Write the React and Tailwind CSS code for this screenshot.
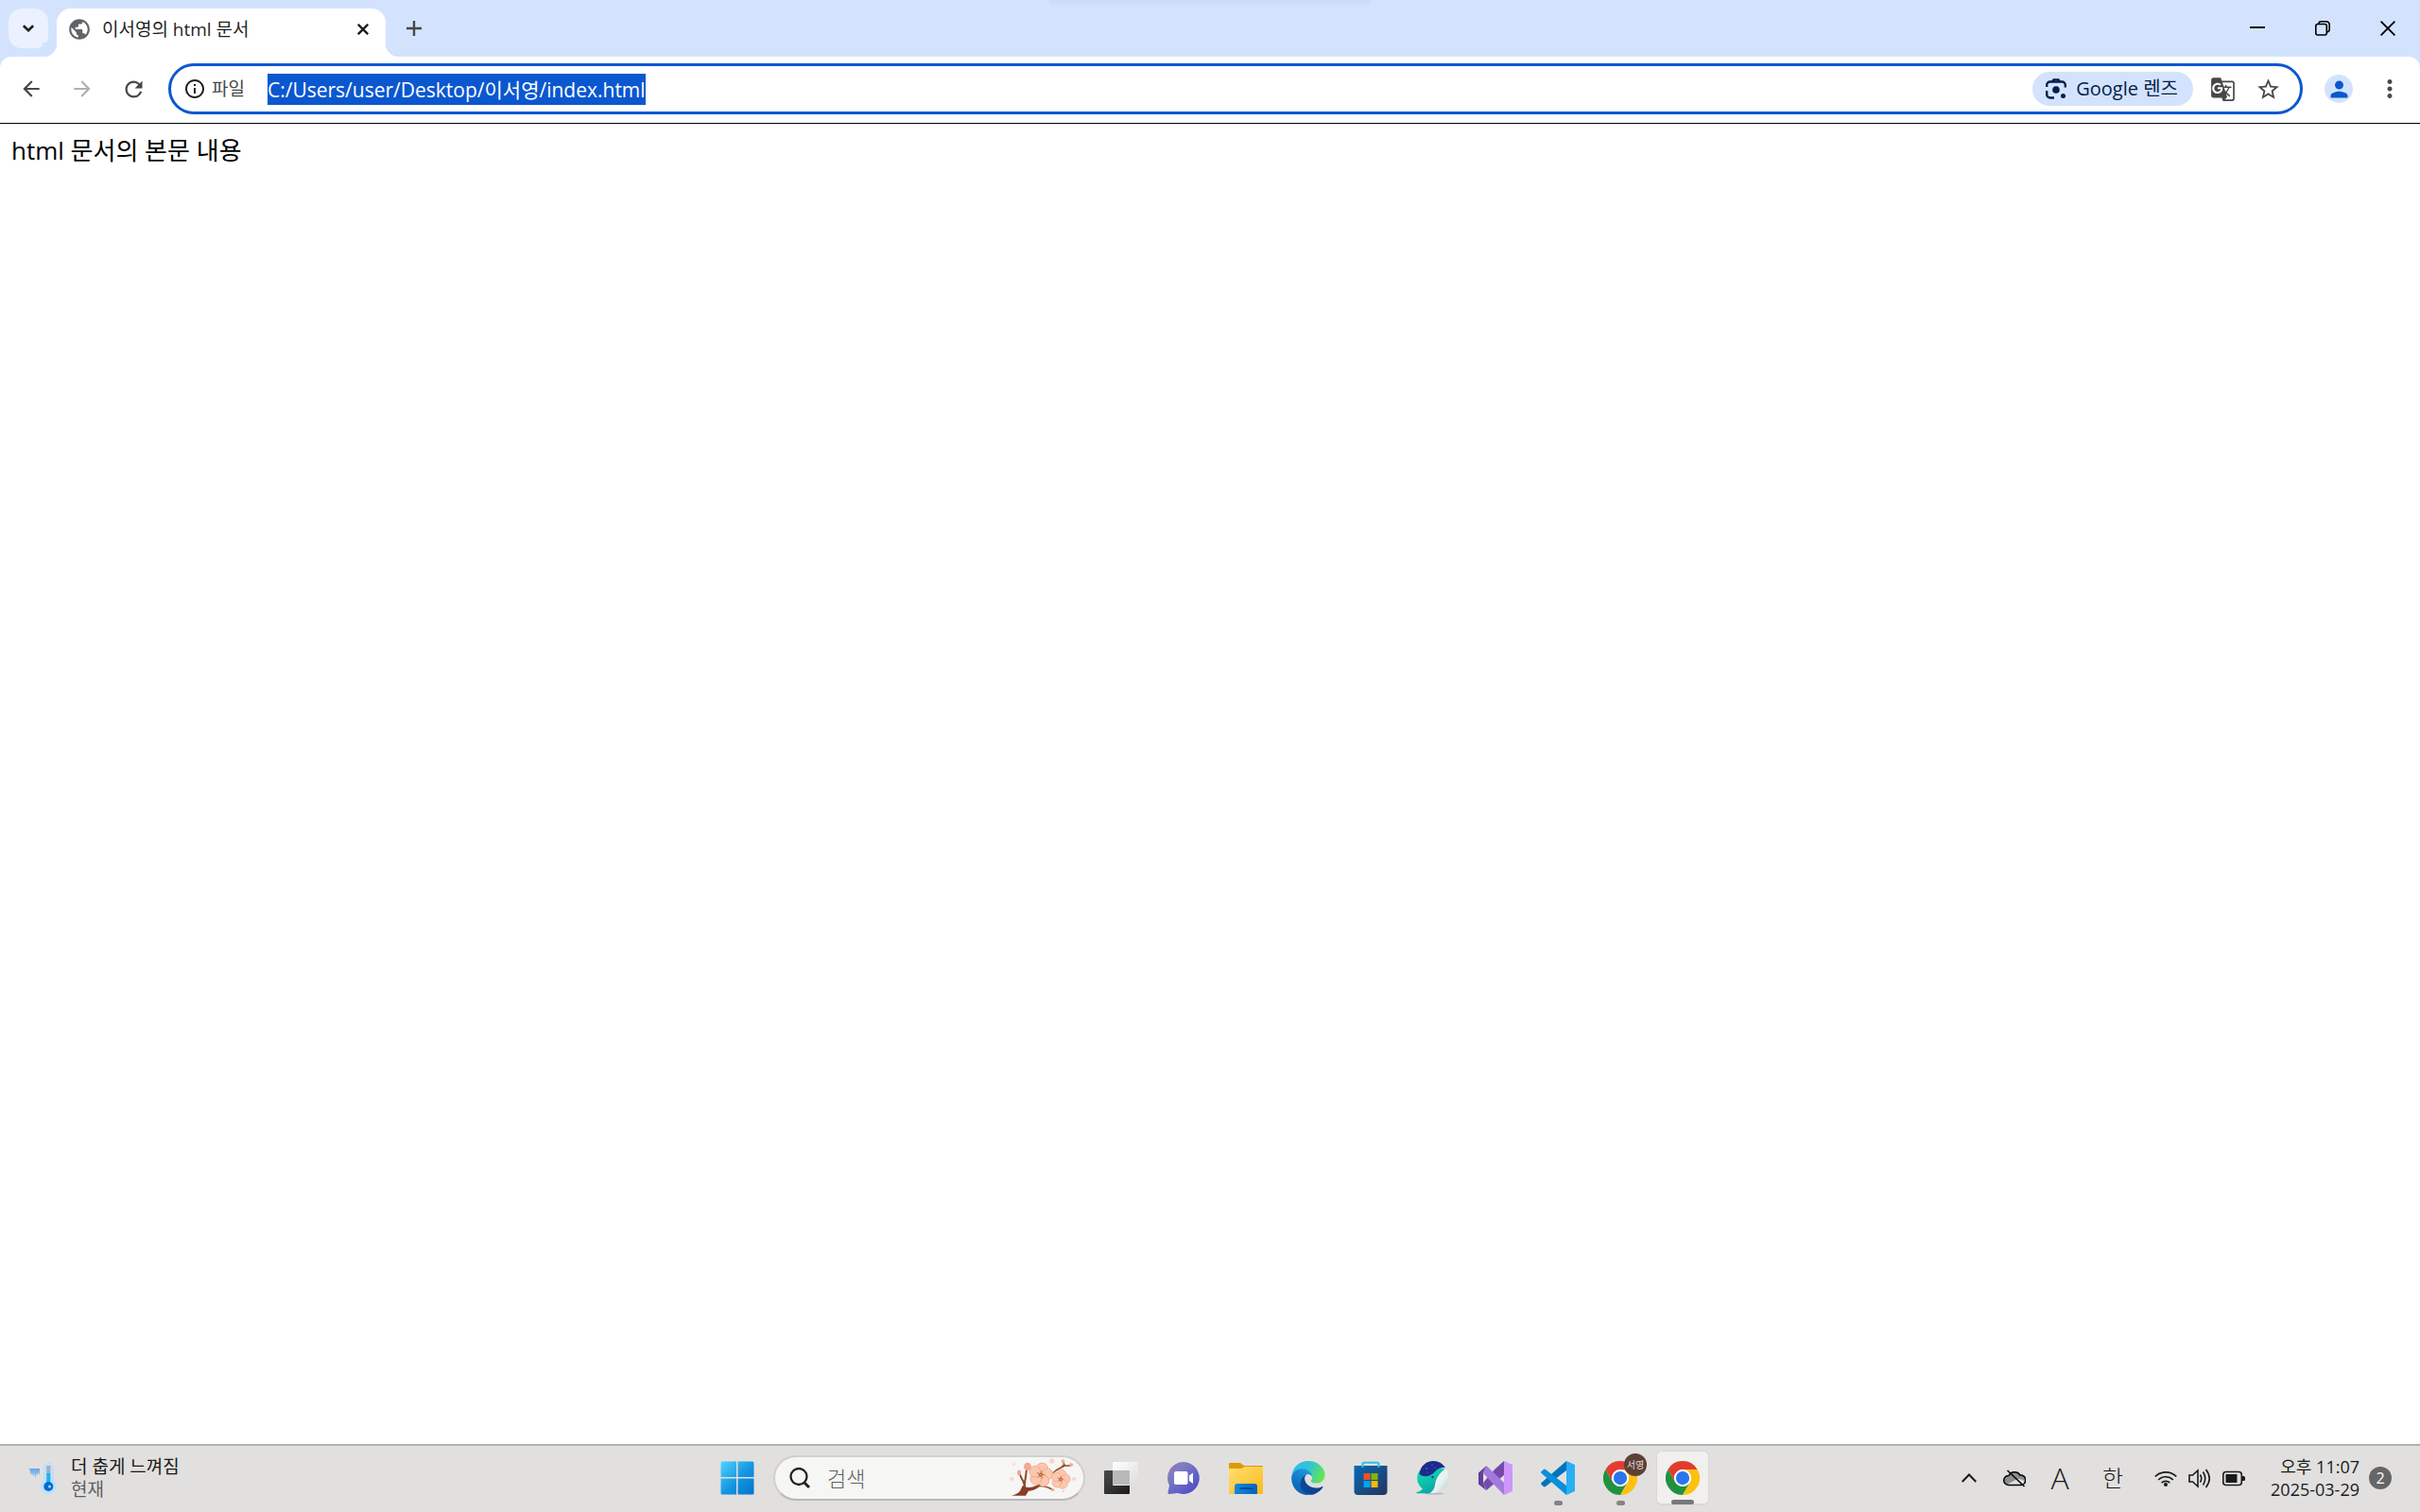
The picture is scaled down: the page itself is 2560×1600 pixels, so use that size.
import {
	MdArrowBack,
	MdArrowForward,
	MdGTranslate,
	MdInfoOutline,
	MdMoreVert,
	MdPerson,
	MdPublic,
	MdRefresh,
	MdStarBorder,
} from "react-icons/md";

function TabStrip() {
	return (
		<header className="relative flex h-[60px] items-start bg-[#d3e3fd] pt-[9px] pl-[9px]">
			<div className="absolute top-0 left-1/2 h-2 w-[340px] -translate-x-1/2 rounded-b-xl bg-linear-to-b from-[#cadbf5] to-[#d3e3fd]" />
			<button
				aria-label="탭 검색"
				className="flex size-[42px] items-center justify-center rounded-[14px] bg-[#ebf1fe]"
			>
				<svg className="h-2 w-3" viewBox="0 0 12 8" fill="none" stroke="#1f1f1f" strokeWidth="2.600">
					<path d="M.9 1.200 6 6.200l5.100-5" />
				</svg>
			</button>
			<div className="relative ml-[9px] flex h-[51px] w-[348px] items-center rounded-t-[15px] bg-white pr-3 pb-2 pl-[11px]">
				<span className="absolute bottom-0 -left-[15px] size-[15px] bg-[radial-gradient(circle_at_0_0,#d3e3fd_15px,#fff_16px)]" />
				<span className="absolute -right-[15px] bottom-0 size-[15px] bg-[radial-gradient(circle_at_100%_0,#d3e3fd_15px,#fff_16px)]" />
				<MdPublic className="size-[26px] text-[#5f6368]" />
				<span className="ml-[11px] flex-1 text-[19px] leading-6 text-[#1f1f1f]">이서영의 html 문서</span>
				<button aria-label="탭 닫기" className="flex size-6 items-center justify-center">
					<svg className="size-3" viewBox="0 0 12 12" stroke="#1f1f1f" strokeWidth="2.400">
						<path d="m.8.8 10.400 10.400M11.200.8.8 11.200" />
					</svg>
				</button>
			</div>
			<button aria-label="새 탭" className="ml-[9px] flex size-[42px] items-center justify-center">
				<svg className="size-4" viewBox="0 0 16 16" stroke="#474747" strokeWidth="2.400">
					<path d="M8 0v16M0 8h16" />
				</svg>
			</button>
			<div className="-mt-[9px] ml-auto flex h-[60px]">
				<button aria-label="최소화" className="flex w-[69px] items-center justify-center">
					<svg className="size-4" viewBox="0 0 16 16" stroke="#000" strokeWidth="2">
						<path d="M0 7h16" />
					</svg>
				</button>
				<button aria-label="이전 크기로 복원" className="flex w-[69px] items-center justify-center">
					<svg className="size-4" viewBox="0 0 16 16" fill="none" stroke="#000" strokeWidth="1.600">
						<rect x=".8" y="3.500" width="11.500" height="11.500" rx="2" />
						<path d="M3.800 3.200C4 1.500 5 .8 6.200.8h5.300c2.400 0 3.700 1.400 3.700 3.700V9c0 1.600-.8 2.700-2.600 3" />
					</svg>
				</button>
				<button aria-label="닫기" className="flex w-[69px] items-center justify-center">
					<svg className="size-4" viewBox="0 0 16 16" stroke="#000" strokeWidth="1.800">
						<path d="m.6.6 14.800 14.800M15.400.6.6 15.400" />
					</svg>
				</button>
			</div>
		</header>
	);
}

function LensIcon() {
	return (
		<svg className="size-[22px]" viewBox="0 0 22 22" fill="none" stroke="#041e49" strokeWidth="2.400">
			<path d="M1.200 9V7a3.500 3.500 0 0 1 3.500-3.500h12.600A3.500 3.500 0 0 1 20.800 7v2.500M1.200 13v4a3.500 3.500 0 0 0 3.500 3.500H9" />
			<path d="M7.200 3.500 8.500 1.400h5l1.300 2.100" />
			<circle cx="11" cy="12" r="3.800" fill="#041e49" stroke="none" />
			<circle cx="18.500" cy="18.500" r="2.500" fill="#041e49" stroke="none" />
		</svg>
	);
}

function Toolbar() {
	return (
		<div className="bg-[#d3e3fd]">
			<nav className="flex h-[71px] items-center rounded-t-xl border-b border-black bg-white pr-[11px] pb-0.5 pl-3 text-[#474747]">
				<div className="flex gap-3">
					<button aria-label="뒤로" className="flex size-[42px] items-center justify-center">
						<MdArrowBack className="size-[26px]" />
					</button>
					<button aria-label="앞으로" disabled className="flex size-[42px] items-center justify-center text-[#b0b0b0]">
						<MdArrowForward className="size-[26px]" />
					</button>
					<button aria-label="새로고침" className="flex size-[42px] items-center justify-center">
						<MdRefresh className="size-[27px]" />
					</button>
				</div>
				<div className="ml-4 flex h-[54px] flex-1 items-center rounded-full border-3 border-[#0b57d0] pr-5 pl-[13px]">
					<button className="flex items-center gap-1.5 text-[19px] leading-6">
						<MdInfoOutline className="size-6 text-[#1f1f1f]" />
						파일
					</button>
					<input
						aria-label="주소창"
						defaultValue="C:/Users/user/Desktop/이서영/index.html"
						className="ml-6 h-[33px] field-sizing-content bg-[#0b57d0] text-[21px] text-white outline-none"
					/>
					<button className="ml-auto flex h-9 items-center gap-2.5 rounded-full bg-[#d3e3fd] pr-4 pl-3.5 text-[20px] leading-6 text-[#041e49]">
						<LensIcon />
						Google 렌즈
					</button>
					<button aria-label="이 페이지 번역하기" className="ml-[18px]">
						<MdGTranslate className="size-[27px]" />
					</button>
					<button aria-label="북마크에 추가" className="ml-[21px]">
						<MdStarBorder className="size-[27px]" />
					</button>
				</div>
				<button
					aria-label="프로필"
					className="ml-[23px] flex size-[30px] items-center justify-center rounded-full bg-[#d3e3fd] text-[#0b57d0]"
				>
					<MdPerson className="size-[27px]" />
				</button>
				<button aria-label="Chrome 메뉴" className="ml-[18px] flex size-[42px] items-center justify-center">
					<MdMoreVert className="size-[30px]" />
				</button>
			</nav>
		</div>
	);
}

function WeatherIcon() {
	return (
		<svg className="h-[34px] w-[30px]" viewBox="0 0 30 34">
			<defs>
				<linearGradient id="ice" x1="0" x2="0" y1="0" y2="1">
					<stop stopColor="#6aa5e8" />
					<stop offset="1" stopColor="#a5cff5" />
				</linearGradient>
			</defs>
			<path fill="url(#ice)" d="M0 7h11v7l-1.500-3-1 4-1-3-1 6-1.500-6-1 4-1-4-1 2z" />
			<path fill="#bfe0fb" d="M15 6a5.500 5.500 0 0 1 11 0v13.500a8.500 8.500 0 1 1-11 0z" />
			<path fill="#a3adbb" d="M18.300 4h4v9h-4z" />
			<path fill="#19b4f2" d="M18.300 12h4v12h-4z" />
			<circle cx="20.300" cy="26" r="5" fill="#0668cf" />
			<circle cx="21.500" cy="26" r="1.600" fill="#9fd6ff" />
		</svg>
	);
}

function StartIcon() {
	return (
		<svg className="size-9" viewBox="0 0 36 36">
			<defs>
				<linearGradient id="win" x1="0" y1="0" x2="1" y2="1">
					<stop stopColor="#4fd3ff" />
					<stop offset=".55" stopColor="#1494e0" />
					<stop offset="1" stopColor="#0073d1" />
				</linearGradient>
			</defs>
			<path
				fill="url(#win)"
				d="M2 .5h15V17H.5V2Q.5.5 2 .5M18.500.5H34q1.500 0 1.500 1.500v15h-17zM.5 18.500H17v17H2Q.5 35.500.5 34zM18.500 18.500h17V34q0 1.500-1.500 1.500H18.500z"
			/>
		</svg>
	);
}

function Flower({ x, y, r }) {
	return (
		<g transform={`translate(${x} ${y}) scale(${r})`}>
			{[0, 72, 144, 216, 288].map((angle) => (
				<g key={angle} transform={`rotate(${angle + 12})`}>
					<ellipse cy="-.55" rx=".46" ry=".42" fill="#fcc8ad" stroke="#f2a386" strokeWidth=".06" />
					<path d="M0 0v-.35" stroke="#b0603f" strokeWidth=".06" />
				</g>
			))}
			<circle r=".14" fill="#a8542f" />
			<circle r=".06" fill="#f6d36b" />
		</g>
	);
}

function BlossomIcon() {
	return (
		<svg className="h-[42px] w-[70px]" viewBox="0 0 70 42">
			<g fill="#fcd3cd">
				<circle cx="44.600" cy="3" r="2.800" />
				<circle cx="2.300" cy="22" r="2" />
				<circle cx="68" cy="22" r="2" />
				<circle cx="4.600" cy="6.600" r="1.400" />
				<circle cx="56.600" cy="35" r="1.200" />
			</g>
			<path fill="#8c3b24" d="M2 39.700q7-2 9-5l3-6 4 2q5 1 11-2l2 2q-6 4-11 4l-3 5z" />
			<g fill="none" stroke="#8c4a27" strokeWidth="2" strokeLinecap="round">
				<path d="M16 30q0-6 1-10l1-8M15.500 28q-1-4-3-7l-2-5" />
				<path d="M28 30q8-2 17 3" strokeWidth="1.500" />
				<path d="M26 31q10-4 14-9t9-9l9-5-1-4M56 8l8 0" strokeWidth="1.600" />
			</g>
			<g fill="#f5a78f">
				<ellipse cx="19" cy="9" rx="4" ry="4.300" />
				<ellipse cx="10" cy="15.500" rx="2" ry="3" />
				<ellipse cx="56.600" cy="3.500" rx="1.800" ry="2.200" />
				<ellipse cx="65" cy="7" rx="2.300" ry="1.800" />
				<ellipse cx="45.500" cy="33.500" rx="2" ry="1.600" />
			</g>
			<Flower x={33} y={17.600} r={13} />
			<Flower x={54} y={22.500} r={10.500} />
		</svg>
	);
}

function TaskViewIcon() {
	return (
		<svg className="size-9" viewBox="0 0 36 36">
			<defs>
				<linearGradient id="tvDark" x1="0" y1="0" x2="1" y2="1">
					<stop stopColor="#4c4c4c" />
					<stop offset="1" stopColor="#1b1b1b" />
				</linearGradient>
				<linearGradient id="tvLight" x1="0" y1="0" x2="1" y2="1">
					<stop stopColor="#fff" />
					<stop offset="1" stopColor="#dcdcdc" />
				</linearGradient>
			</defs>
			<rect x="0" y="10" width="27" height="25" rx="1" fill="url(#tvDark)" />
			<rect x="9" y="1" width="27" height="25" rx="1" fill="url(#tvLight)" />
			<path fill="#b9b9b9" d="M9 10h18v15H9z" />
		</svg>
	);
}

function ChatIcon() {
	return (
		<svg className="size-9" viewBox="0 0 36 36">
			<defs>
				<linearGradient id="chat" x1="0" y1="0" x2=".9" y2="1">
					<stop stopColor="#a271ae" />
					<stop offset=".3" stopColor="#7f7cc4" />
					<stop offset="1" stopColor="#4c4ac6" />
				</linearGradient>
			</defs>
			<path fill="url(#chat)" d="M18 1a17 17 0 1 1-6 33l-9 1q-2 0-1.500-2L3 26A17 17 0 0 1 18 1" />
			<rect x="8" y="11" width="14.500" height="14" rx="2" fill="#fff" />
			<path fill="#fff" d="m24 15.500 4-3v11.500l-4-3z" />
		</svg>
	);
}

function FolderIcon() {
	return (
		<svg className="size-9" viewBox="0 0 36 36">
			<defs>
				<linearGradient id="folder" x1="0" y1="0" x2="1" y2="1">
					<stop stopColor="#ffdf73" />
					<stop offset="1" stopColor="#fbb917" />
				</linearGradient>
				<linearGradient id="drawer" x1="0" x2="1">
					<stop stopColor="#1688df" />
					<stop offset="1" stopColor="#0063bd" />
				</linearGradient>
			</defs>
			<path fill="#dc9a09" d="M0 3q0-1 1-1h11l4 3h19q1 0 1 1v6H0z" />
			<path fill="url(#folder)" d="M0 8h12q2 0 3-1l2-1h19v28q0 1-1 1H1q-1 0-1-1z" />
			<path fill="url(#drawer)" d="M6 35v-8q0-3 3-3h18q3 0 3 3v8z" />
			<path stroke="#0b4a94" strokeWidth="1.800" strokeLinecap="round" d="M12 29h13" />
		</svg>
	);
}

function EdgeIcon() {
	return (
		<svg className="size-9" viewBox="0 0 258 260">
			<defs>
				<linearGradient id="edgeDeep" x1="0" x2="1">
					<stop stopColor="#0b4a9c" />
					<stop offset="1" stopColor="#103f86" />
				</linearGradient>
				<linearGradient id="edgeBlue" x1=".6" y1="0" x2=".3" y2="1">
					<stop stopColor="#1b9de2" />
					<stop offset=".4" stopColor="#147dca" />
					<stop offset="1" stopColor="#0659b5" />
				</linearGradient>
				<linearGradient id="edgeTop" x1="0" y1=".3" x2="1" y2=".6">
					<stop stopColor="#35b9f0" />
					<stop offset=".5" stopColor="#33c6cf" />
					<stop offset="1" stopColor="#69e64b" />
				</linearGradient>
			</defs>
			<path
				fill="url(#edgeDeep)"
				d="M235.680 195.460a93.730 93.730 0 0 1-10.540 4.710 101.870 101.870 0 0 1-35.900 6.460c-47.320 0-88.540-32.550-88.540-74.320A31.480 31.480 0 0 1 117.130 105c-42.800 1.800-53.800 46.400-53.800 72.530 0 73.880 68.090 81.370 82.760 81.370 7.910 0 19.840-2.300 27-4.560l1.310-.44a128.340 128.340 0 0 0 66.600-52.800 4 4 0 0 0-5.320-5.640z"
			/>
			<path
				fill="url(#edgeBlue)"
				d="M105.730 246.300a79.200 79.200 0 0 1-22.740-21.340 80.720 80.720 0 0 1 29.530-120c3.120-1.470 8.450-4.130 15.540-4a32.350 32.350 0 0 1 25.690 13 31.880 31.880 0 0 1 6.360 18.660c0-.21 24.460-79.600-80-79.600-43.900 0-80 41.660-80 78.210a130.150 130.150 0 0 0 12.110 56 128 128 0 0 0 156.380 67.110 75.550 75.550 0 0 1-62.780-8z"
			/>
			<path
				fill="url(#edgeTop)"
				d="M152.330 148.860c-.81 1.050-3.300 2.500-3.300 5.660 0 2.610 1.700 5.120 4.720 7.230 14.380 10 41.490 8.680 41.560 8.680a59.560 59.560 0 0 0 30.270-8.350 61.380 61.380 0 0 0 30.430-52.880c.26-22.410-8-37.310-11.340-43.910C223.460 23.840 177.720 0 128 0A128 128 0 0 0 0 126.200c.48-36.540 36.800-66.050 80-66.050 3.500 0 23.460.34 42 10.070 16.340 8.580 24.900 18.940 30.850 29.210 6.180 10.670 7.280 24.150 7.280 29.520s-2.740 13.330-7.800 19.910z"
			/>
		</svg>
	);
}

function StoreIcon() {
	return (
		<svg className="size-9" viewBox="0 0 36 36">
			<defs>
				<linearGradient id="store" x1="0" y1="0" x2="1" y2="1">
					<stop stopColor="#0669b5" />
					<stop offset="1" stopColor="#26355c" />
				</linearGradient>
			</defs>
			<path fill="url(#store)" d="M.5 5h35v27q0 4-4 4h-27q-4 0-4-4z" />
			<path fill="none" stroke="#2bc0f0" strokeWidth="2" d="M9.500 7V3q0-1.200 1.200-1.200h14.600q1.200 0 1.200 1.200v4" />
			<path fill="#f25022" d="M10.500 13h7v7h-7z" />
			<path fill="#7fba00" d="M18.500 13h7v7h-7z" />
			<path fill="#00a4ef" d="M10.500 21h7v7h-7z" />
			<path fill="#ffb900" d="M18.500 21h7v7h-7z" />
		</svg>
	);
}

function WhaleIcon() {
	return (
		<svg className="size-9" viewBox="0 0 36 36">
			<defs>
				<linearGradient id="whale" x1="0" y1="0" x2=".5" y2="1">
					<stop stopColor="#13e0b6" />
					<stop offset="1" stopColor="#0aa6a5" />
				</linearGradient>
				<linearGradient id="belly" x1="0" y1="0" x2="1" y2="1">
					<stop stopColor="#fff" />
					<stop offset=".6" stopColor="#e6f1f1" />
					<stop offset="1" stopColor="#b5c4c6" />
				</linearGradient>
			</defs>
			<ellipse cx="19" cy="34.500" rx="10" ry="1" fill="#b5b5b4" />
			<path
				fill="url(#whale)"
				d="M4 10C1 13 .5 19 2 23q1.500 4 5 6.500-2.500 2.700-6 3.500-1.500.8 0 1.200h15L32 9q-5-3-12 0z"
			/>
			<path fill="url(#belly)" d="M31.500 7.500c3.500 6 3.500 13.500.5 18.500-3.500 6-9.500 8.500-18 8.200 4-2 5.500-5 6-9 .8-7 5-12.500 11.500-17.700" />
			<path fill="#1c2a8c" d="M3.500 14C4.500 5 11 0 18 0c6 0 10.500 3 13 7.300-5-1-8 .7-11.500 4.500-5 5.200-11 5.700-16 2.200" />
			<g fill="#8292e8">
				<circle cx="11" cy="8" r=".7" />
				<circle cx="17" cy="4" r=".6" />
				<circle cx="12" cy="12" r=".5" />
				<circle cx="20" cy="7" r=".5" />
			</g>
			<circle cx="17.500" cy="17" r="1.200" fill="#153f6d" />
		</svg>
	);
}

function VisualStudioIcon() {
	return (
		<svg className="size-9" viewBox="0 0 36 36">
			<path fill="#5f4098" d="M0 12.500 8.500 5 5 13v10l3 8-8-6.500z" />
			<path fill="#7549ad" d="M27 0v15L8.500 31 5 23 17.500 8.500z" />
			<path fill="#a479dd" d="M8.500 5 27 23v13L4.500 12.500z" />
			<path fill="#ce95fb" d="m27 0 9 4v28l-9 4z" />
		</svg>
	);
}

function VsCodeIcon() {
	return (
		<svg className="size-9" viewBox="0 0 36 36">
			<path fill="#0074bb" d="M27 0v10L5 27q-1.200.8-2.200 0L.6 25q-.9-1 0-2z" />
			<path fill="#0a8fdb" d="M27 36V26L5 9q-1.200-.8-2.200 0L.6 11q-.9 1 0 2z" />
			<path fill="#2aaef4" d="m27 0 9 4v28l-9 4z" />
		</svg>
	);
}

function ChromeIcon() {
	return (
		<svg className="size-9" viewBox="0 0 48 48">
			<path fill="#e33b2e" d="M3.215 12a24 24 0 0 1 41.570 0H24a12 12 0 0 0-10.392 18z" />
			<path fill="#22913f" d="M3.215 12 13.608 30a12 12 0 0 0 20.784 0L24 48A24 24 0 0 1 3.215 12" />
			<path fill="#fdc111" d="M44.785 12A24 24 0 0 1 24 48l10.392-18A12 12 0 0 0 24 12z" />
			<circle cx="24" cy="24" r="12" fill="#fff" />
			<circle cx="24" cy="24" r="9.500" fill="#2a75ec" />
		</svg>
	);
}

const apps = [
	{ name: "작업 보기", icon: TaskViewIcon },
	{ name: "채팅", icon: ChatIcon },
	{ name: "파일 탐색기", icon: FolderIcon },
	{ name: "Microsoft Edge", icon: EdgeIcon },
	{ name: "Microsoft Store", icon: StoreIcon },
	{ name: "네이버 웨일", icon: WhaleIcon },
	{ name: "Visual Studio", icon: VisualStudioIcon },
	{ name: "Visual Studio Code", icon: VsCodeIcon, running: true },
	{ name: "Chrome 서영", icon: ChromeIcon, running: true, badge: "서영" },
	{ name: "Chrome", icon: ChromeIcon, active: true },
];

function AppButton({ app }) {
	const Icon = app.icon;
	return (
		<button
			aria-label={app.name}
			className={
				app.active
					? "relative flex h-[58px] w-14 items-center justify-center rounded-md border border-b-2 border-[#d9d8d7] bg-[#f1f0ef]"
					: "relative flex h-[58px] w-14 items-center justify-center"
			}
		>
			<Icon />
			{app.badge ? (
				<span className="absolute top-[3px] right-0 flex size-6 items-center justify-center rounded-full bg-[#5d4037] text-[10px] leading-3 text-[#e4dcd9]">
					{app.badge}
				</span>
			) : null}
			{app.running ? <span className="absolute bottom-0 h-[5px] w-[9px] rounded-full bg-[#858484]" /> : null}
			{app.active ? <span className="absolute -bottom-px h-[5px] w-6 rounded-full bg-[#7a7979]" /> : null}
		</button>
	);
}

function Tray() {
	return (
		<div className="flex items-center justify-end pr-[30px] text-[#1a1a1a]">
			<button aria-label="숨겨진 아이콘 표시">
				<svg className="h-2.5 w-4" viewBox="0 0 16 10" fill="none" stroke="currentColor" strokeWidth="2">
					<path d="m.7 9 7.300-7.500L15.300 9" />
				</svg>
			</button>
			<button aria-label="OneDrive" className="ml-7">
				<svg className="h-5 w-6" viewBox="0 0 24 20">
					<path fill="#8d8d8d" d="M5.500 17.500A5 5 0 0 1 6 7.500a7 7 0 0 1 12-.5 5 5 0 0 1 1 10.500z" />
					<path fill="#dedede" d="m4 17 11-6q6 0 8 3-1 3.500-4 3.500H5.500z" />
					<path
						fill="none"
						stroke="#000"
						strokeWidth="1.500"
						d="M5.500 17.500A5 5 0 0 1 6 7.500a7 7 0 0 1 12-.5 5 5 0 0 1 1 10.500zM4.500 2l18 17"
					/>
				</svg>
			</button>
			<button className="ml-6 w-6 text-center text-[32px] leading-8 font-light">A</button>
			<button className="ml-8 w-6 text-center text-[24px] leading-8 font-light">한</button>
			<button aria-label="네트워크, 볼륨, 배터리" className="ml-8 flex gap-3">
				<svg className="size-6" viewBox="0 0 24 24" fill="none" stroke="currentColor" strokeWidth="1.700">
					<path d="M.7 10.500a16 16 0 0 1 22.600 0M4.200 14a11 11 0 0 1 15.600 0M7.700 17.200a6.200 6.200 0 0 1 8.600 0" />
					<circle cx="12" cy="19" r="2" fill="currentColor" stroke="none" />
				</svg>
				<svg className="size-6" viewBox="0 0 24 24" fill="none" stroke="currentColor" strokeWidth="1.600">
					<path d="M1 9h3.500L10 4v17l-5.500-5H1zM12.500 8.500q2.500 4 0 8M15.500 5.500q4.500 7 0 14M18.500 3q7.500 9.500 0 19" />
				</svg>
				<svg className="size-6" viewBox="0 0 24 24" fill="none" stroke="currentColor" strokeWidth="1.600">
					<rect x=".8" y="5.500" width="19.500" height="14" rx="3" />
					<path fill="currentColor" stroke="none" d="M3.500 8h12v9h-12zM21 10h1.500q1.500 0 1.500 1.500v2q0 1.500-1.500 1.500H21z" />
				</svg>
			</button>
			<button className="ml-[27px] flex items-center gap-2.5 text-right text-[18px] leading-6">
				<span>
					오후 11:07
					<br />
					2025-03-29
				</span>
				<span className="flex size-6 items-center justify-center rounded-full bg-[#666] text-[16px] text-white">2</span>
			</button>
		</div>
	);
}

function Taskbar() {
	return (
		<footer className="grid h-[72px] grid-cols-[1fr_auto_1fr] items-center border-t-2 border-[#b0b0af] bg-[#e1e0df] pb-0.5">
			<button className="flex items-center gap-3.5 justify-self-start pl-[31px] text-left text-[19px] leading-6">
				<WeatherIcon />
				<span className="text-[#1a1a1a]">
					더 춥게 느껴짐
					<br />
					<span className="text-[#5f5f5f]">현재</span>
				</span>
			</button>
			<div className="flex items-center gap-2.5">
				<button aria-label="시작" className="flex h-[58px] w-14 items-center justify-center">
					<StartIcon />
				</button>
				<label className="flex h-12 w-[330px] items-center rounded-full border-2 border-[#d0cfce] border-b-[#b9b8b7] bg-[#f6f6f5] pr-2 pl-[15px]">
					<svg className="size-[22px] shrink-0" viewBox="0 0 22 22" fill="none" stroke="#222" strokeWidth="2.300">
						<circle cx="10" cy="9.500" r="8.500" />
						<path strokeWidth="3" d="m16 16 5 5" />
					</svg>
					<input
						aria-label="검색"
						placeholder="검색"
						className="ml-[18px] min-w-0 flex-1 text-[22px] leading-7 font-light outline-none placeholder:text-[#5f5f5f]"
					/>
					<BlossomIcon />
				</label>
				{apps.map((app) => (
					<AppButton key={app.name} app={app} />
				))}
			</div>
			<Tray />
		</footer>
	);
}

export default function App() {
	return (
		<div className="flex min-h-screen flex-col bg-white font-['Open_Sans','Noto_Sans_CJK_KR',sans-serif]">
			<TabStrip />
			<Toolbar />
			<main className="flex-1 px-3 py-3">
				<p className="text-[26px] leading-8 text-black">html 문서의 본문 내용</p>
			</main>
			<Taskbar />
		</div>
	);
}
